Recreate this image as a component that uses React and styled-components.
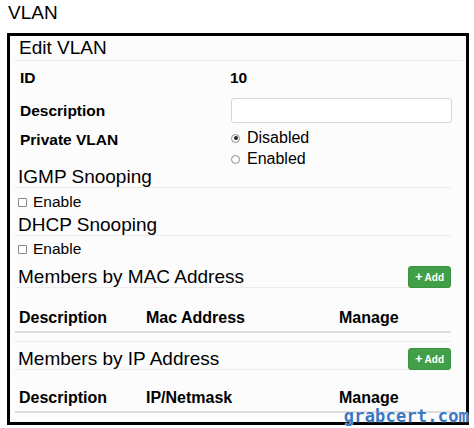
import React from 'react';
import styled, { createGlobalStyle } from 'styled-components';

const GlobalStyle = createGlobalStyle`
    body {
        margin: 0;
        background: #ffffff;
        font-family: "Liberation Sans", Arial, sans-serif;
        color: #000;
    }
`;

const macColumns = ['Description', 'Mac Address', 'Manage'];
const ipColumns = ['Description', 'IP/Netmask', 'Manage'];

const App = () => {
    return (
        <Page>
            <GlobalStyle />
            <Title>VLAN</Title>
            <Box>
                <Header>Edit VLAN</Header>
                <Form>
                    <Label>ID</Label>
                    <Value>10</Value>
                    <Label>Description</Label>
                    <Field type="text" />
                    <Label $top>Private VLAN</Label>
                    <Radios>
                        <Option><Radio $checked />Disabled</Option>
                        <Option><Radio />Enabled</Option>
                    </Radios>
                </Form>

                <SubHeader $gap={-3}>IGMP Snooping</SubHeader>
                <Check $gap={4}><Square />Enable</Check>
                <SubHeader $gap={2}>DHCP Snooping</SubHeader>
                <Check $gap={3}><Square />Enable</Check>

                <Section $gap={7}>
                    <HeadRow>
                        <HeadText>Members by MAC Address</HeadText>
                        <AddButton><Plus>+</Plus>Add</AddButton>
                    </HeadRow>
                    <Table $gap={20}>
                        <thead>
                            <tr>
                                {macColumns.map((c) => <Th key={c}>{c}</Th>)}
                            </tr>
                        </thead>
                    </Table>
                </Section>

                <Section $gap={8} $line>
                    <HeadRow>
                        <HeadText>Members by IP Address</HeadText>
                        <AddButton><Plus>+</Plus>Add</AddButton>
                    </HeadRow>
                    <Table $gap={18}>
                        <thead>
                            <tr>
                                {ipColumns.map((c) => <Th key={c}>{c}</Th>)}
                            </tr>
                        </thead>
                    </Table>
                </Section>

                <Watermark>grabcert.com</Watermark>
            </Box>
        </Page>
    );
};

const Page = styled.div`
    width: 474px;
    height: 428px;
    padding-left: 7px;
    box-sizing: border-box;
    overflow: hidden;
`;

const Title = styled.div`
    font-size: 19px;
    line-height: 22px;
    padding: 2px 0 0 1px;
    height: 22px;
`;

const Box = styled.div`
    position: relative;
    margin-top: 9px;
    width: 462px;
    height: 392px;
    box-sizing: border-box;
    border: 3px solid #000;
    background: #fcfcfc;
    padding: 0 15px 0 5px;
`;

const Header = styled.div`
    font-size: 19px;
    line-height: 24px;
    padding-left: 4px;
    margin-right: -12px;
    border-bottom: 1px solid #ececec;
`;

const Form = styled.div`
    display: grid;
    grid-template-columns: 215px 1fr;
    grid-template-rows: 24px 25px auto;
    row-gap: 8px;
    margin-top: 5px;
    align-items: center;
    &> :nth-child(5) { margin-top: -4px; }
    &> :nth-child(6) { margin-top: -4px; }
`;

const Label = styled.div`
    font-size: 15.5px;
    font-weight: bold;
    line-height: 20px;
    padding-left: 5px;
    align-self: ${(p) => (p.$top ? 'start' : 'center')};
    padding-top: ${(p) => (p.$top ? '3px' : '0')};
`;

const Value = styled.div`
    font-size: 15.5px;
    font-weight: bold;
    line-height: 20px;
`;

const Field = styled.input`
    height: 25px;
    width: 221px;
    box-sizing: border-box;
    border: 1px solid #d6d6d6;
    border-radius: 3px;
    background: #fff;
    margin: 0 0 0 1px;
`;

const Radios = styled.div`
    display: flex;
    flex-direction: column;
    align-self: start;
`;

const Option = styled.div`
    display: flex;
    align-items: center;
    font-size: 16px;
    line-height: 21px;
    gap: 7px;
    padding-left: 1px;
`;

const Radio = styled.span`
    position: relative;
    width: 9px;
    height: 9px;
    border: 1px solid #8c8c8c;
    border-radius: 50%;
    background: #fff;
    box-sizing: border-box;
    margin-top: 1px;
    &::after {
        content: '';
        display: ${(p) => (p.$checked ? 'block' : 'none')};
        position: absolute;
        left: 1.5px;
        top: 1.5px;
        width: 4px;
        height: 4px;
        border-radius: 50%;
        background: #222;
    }
`;

const SubHeader = styled.div`
    font-size: 19px;
    line-height: 21px;
    padding-left: 3px;
    margin-top: ${(p) => p.$gap}px;
    border-bottom: 1px solid #ececec;
`;

const Check = styled.div`
    display: flex;
    align-items: center;
    gap: 6px;
    font-size: 15.5px;
    line-height: 20px;
    padding-left: 3px;
    margin-top: ${(p) => p.$gap}px;
`;

const Square = styled.span`
    width: 9px;
    height: 9px;
    box-sizing: border-box;
    border: 1px solid #8a8a8a;
    border-radius: 1px;
    background: #fff;
`;

const Section = styled.div`
    margin-top: ${(p) => p.$gap}px;
    border-top: ${(p) => (p.$line ? '1px solid #ececec' : 'none')};
    padding-top: ${(p) => (p.$line ? '6px' : '0')};
`;

const HeadRow = styled.div`
    display: flex;
    align-items: flex-start;
    justify-content: space-between;
    height: 21px;
    border-bottom: 1px solid #ececec;
`;

const HeadText = styled.div`
    font-size: 19px;
    line-height: 21px;
    padding-left: 3px;
`;

const AddButton = styled.button`
    display: flex;
    align-items: center;
    justify-content: center;
    gap: 2px;
    width: 43px;
    height: 22px;
    padding: 0;
    border: 1px solid #3a9440;
    border-radius: 3px;
    background: #41a047;
    color: #fff;
    font-family: "Liberation Sans", Arial, sans-serif;
    font-size: 10px;
    font-weight: bold;
`;

const Plus = styled.span`
    font-size: 13px;
    line-height: 12px;
    margin-top: -1px;
`;

const Table = styled.table`
    width: 100%;
    border-collapse: collapse;
    margin-top: ${(p) => p.$gap}px;
    table-layout: fixed;
    & th:nth-child(1) { width: 123px; }
    & th:nth-child(2) { width: 189px; }
`;

const Th = styled.th`
    text-align: left;
    font-size: 16px;
    font-weight: bold;
    line-height: 20px;
    padding: 0 0 3px 4px;
    border-bottom: 2px solid #dcdcdc;
`;

const Watermark = styled.div`
    position: absolute;
    right: -3px;
    bottom: -3px;
    font-family: "DejaVu Sans Mono", monospace;
    font-size: 17px;
    font-weight: bold;
    line-height: 17px;
    letter-spacing: 0.2px;
    color: #3b78c4;
    text-shadow: 0 0 1px #fff, 0 0 1px #fff;
`;

export default App;
